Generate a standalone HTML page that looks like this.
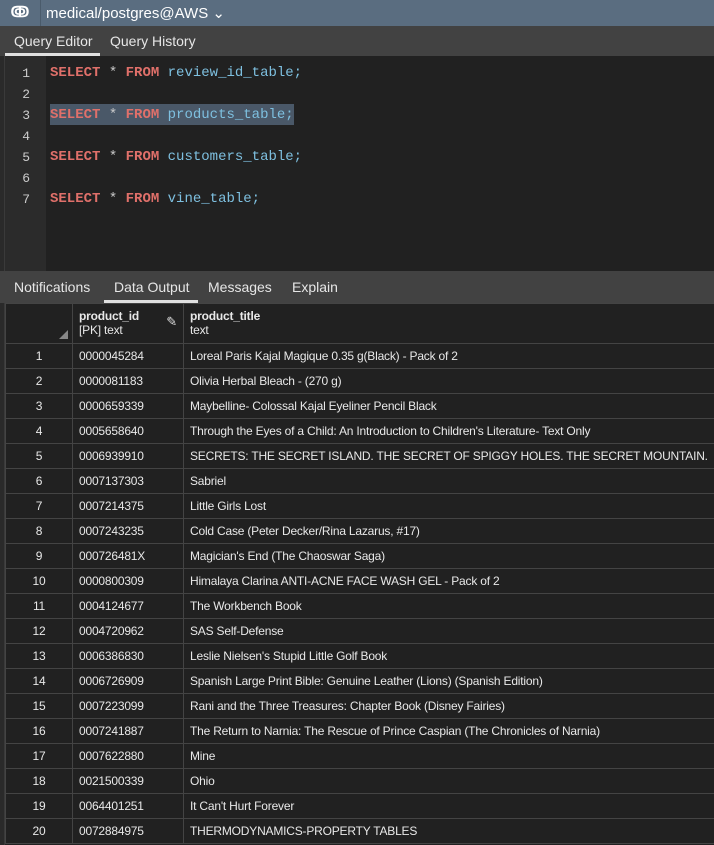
<!DOCTYPE html>
<html><head><style>
*{margin:0;padding:0;box-sizing:border-box}
body{width:714px;height:845px;background:#212121;font-family:"Liberation Sans",sans-serif;overflow:hidden;position:relative;color:#ddd}
.top{position:absolute;left:0;top:0;width:714px;height:26px;background:#5a6d80;color:#fff;font-size:15px}
.top .ic{position:absolute;left:0;top:0;width:41px;height:26px;border-right:1px solid #4a5b6b;text-align:center;line-height:26px;font-weight:bold}
.top .t{position:absolute;left:46px;top:4px}
.tabs{position:absolute;left:0;width:714px;background:#424242;font-size:14px;color:#e6e6e6}
.tabs span{position:absolute;top:7px}
.tabs .u{position:absolute;height:3px;background:#e0e0e0;bottom:0}
.left{position:absolute;left:0;top:56px;width:5px;height:789px;background:#2a2a2a;border-right:1px solid #3a3a3a}
.gut{position:absolute;left:5px;top:56px;width:41px;height:215px;background:#2b2b2b}
.code{position:absolute;font-family:"Liberation Mono",monospace;font-size:14px;white-space:pre}
.ln{position:absolute;left:14px;width:16px;text-align:right;font-family:"Liberation Mono",monospace;font-size:13px;color:#ccc}
.k{color:#e0706a;font-weight:bold}.n{color:#7ec0e0}.p{color:#ccc}
table{position:absolute;left:5px;top:303px;width:720px;table-layout:fixed;border-collapse:collapse;font-size:12px;color:#e8e8e8;letter-spacing:-0.2px}
td,th{border:1px solid #444;height:25px;padding:0 0 0 6px;text-align:left;font-weight:normal;white-space:nowrap;overflow:hidden}
th{height:40px;vertical-align:top;padding-top:5px;background:#212121}
td:first-child{text-align:center;padding:0}
th b{font-weight:bold;display:block}
</style></head><body>
<div class="top"><div class="ic">ↂ</div><div class="t">medical/postgres@AWS ⌄</div></div>
<div class="tabs" style="top:26px;height:30px"><span style="left:14px">Query Editor</span><div class="u" style="left:5px;width:95px"></div><span style="left:110px">Query History</span></div>
<div class="left"></div>
<div class="gut"></div>
<div class="ln" style="top:66px">1</div><div class="ln" style="top:87px">2</div><div class="ln" style="top:108px">3</div><div class="ln" style="top:129px">4</div><div class="ln" style="top:150px">5</div><div class="ln" style="top:171px">6</div><div class="ln" style="top:192px">7</div>
<div style="position:absolute;left:50px;top:104px;width:244px;height:21px;background:#4a5868"></div>
<div class="code" style="left:50px;top:65px"><span class="k">SELECT</span> <span class="p">*</span> <span class="k">FROM</span> <span class="n">review_id_table;</span></div>
<div class="code" style="left:50px;top:107px"><span class="k">SELECT</span> <span class="p">*</span> <span class="k">FROM</span> <span class="n">products_table;</span></div>
<div class="code" style="left:50px;top:149px"><span class="k">SELECT</span> <span class="p">*</span> <span class="k">FROM</span> <span class="n">customers_table;</span></div>
<div class="code" style="left:50px;top:191px"><span class="k">SELECT</span> <span class="p">*</span> <span class="k">FROM</span> <span class="n">vine_table;</span></div>
<div class="tabs" style="top:271px;height:32px"><span style="left:14px;top:8px">Notifications</span><span style="left:114px;top:8px">Data Output</span><div class="u" style="left:104px;width:94px"></div><span style="left:208px;top:8px">Messages</span><span style="left:292px;top:8px">Explain</span></div>
<table>
<colgroup><col style="width:67px"><col style="width:111px"><col style="width:542px"></colgroup>
<tr><th style="position:relative"><span style="position:absolute;right:4px;bottom:4px;width:0;height:0;border-left:9px solid transparent;border-bottom:9px solid #888"></span></th><th style="position:relative"><b>product_id</b>[PK] text<span style="position:absolute;right:6px;top:10px;color:#ddd;font-size:13px">✎</span></th><th><b>product_title</b>text</th></tr>
<tr><td>1</td><td>0000045284</td><td>Loreal Paris Kajal Magique 0.35 g(Black) - Pack of 2</td></tr>
<tr><td>2</td><td>0000081183</td><td>Olivia Herbal Bleach - (270 g)</td></tr>
<tr><td>3</td><td>0000659339</td><td>Maybelline- Colossal Kajal Eyeliner Pencil Black</td></tr>
<tr><td>4</td><td>0005658640</td><td>Through the Eyes of a Child: An Introduction to Children's Literature- Text Only</td></tr>
<tr><td>5</td><td>0006939910</td><td>SECRETS: THE SECRET ISLAND. THE SECRET OF SPIGGY HOLES. THE SECRET MOUNTAIN.</td></tr>
<tr><td>6</td><td>0007137303</td><td>Sabriel</td></tr>
<tr><td>7</td><td>0007214375</td><td>Little Girls Lost</td></tr>
<tr><td>8</td><td>0007243235</td><td>Cold Case (Peter Decker/Rina Lazarus, #17)</td></tr>
<tr><td>9</td><td>000726481X</td><td>Magician's End (The Chaoswar Saga)</td></tr>
<tr><td>10</td><td>0000800309</td><td>Himalaya Clarina ANTI-ACNE FACE WASH GEL - Pack of 2</td></tr>
<tr><td>11</td><td>0004124677</td><td>The Workbench Book</td></tr>
<tr><td>12</td><td>0004720962</td><td>SAS Self-Defense</td></tr>
<tr><td>13</td><td>0006386830</td><td>Leslie Nielsen's Stupid Little Golf Book</td></tr>
<tr><td>14</td><td>0006726909</td><td>Spanish Large Print Bible: Genuine Leather (Lions) (Spanish Edition)</td></tr>
<tr><td>15</td><td>0007223099</td><td>Rani and the Three Treasures: Chapter Book (Disney Fairies)</td></tr>
<tr><td>16</td><td>0007241887</td><td>The Return to Narnia: The Rescue of Prince Caspian (The Chronicles of Narnia)</td></tr>
<tr><td>17</td><td>0007622880</td><td>Mine</td></tr>
<tr><td>18</td><td>0021500339</td><td>Ohio</td></tr>
<tr><td>19</td><td>0064401251</td><td>It Can't Hurt Forever</td></tr>
<tr><td>20</td><td>0072884975</td><td>THERMODYNAMICS-PROPERTY TABLES</td></tr>
</table>
</body></html>
